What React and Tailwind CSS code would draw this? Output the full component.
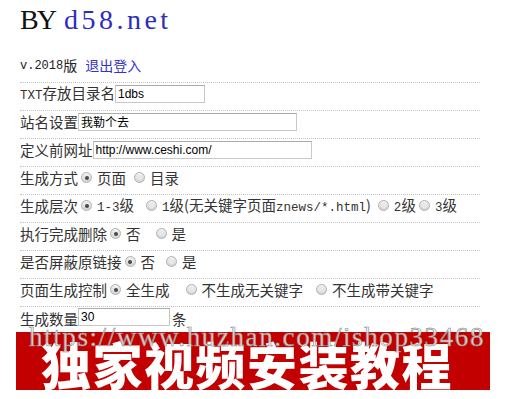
import React from 'react';

const cjk = { fontFamily: '"Noto Sans CJK SC", "Noto Sans", sans-serif' };
const mono = { fontFamily: '"Liberation Mono", "Noto Sans CJK SC", monospace' };

function Radio({ checked }) {
  return (
    <span className="relative inline-block w-[11px] h-[11px] rounded-full border border-[#b0b0b0] bg-linear-to-b from-[#f2f2f2] to-[#d4d4d4] ml-[3px] mr-[5px] shrink-0">
      {checked ? (
        <span className="absolute left-[2.5px] top-[2.5px] w-[4px] h-[4px] rounded-full bg-[#4a4a4a]" />
      ) : (
        <span className="absolute left-[2px] top-[2px] w-[5px] h-[5px] rounded-full bg-[#e8e8e8]" />
      )}
    </span>
  );
}

// gap = space before the radio, in px classes written out in full
function Option({ checked, gap = '', children }) {
  return (
    <label className={`flex items-center ${gap}`}>
      <Radio checked={checked} />
      <span>{children}</span>
    </label>
  );
}

function Row({ children }) {
  return (
    <div className="flex items-center h-[28px] pb-[6px] border-t border-dotted border-[#c4c4c4] text-[14.5px] text-[#333] whitespace-nowrap">
      {children}
    </div>
  );
}

function Field({ width, value, cn }) {
  return (
    <div
      className={`h-[18px] border border-[#c8c8c8] border-t-[#aaa] bg-white flex items-center pl-[2px] text-[12px] text-black ${width}`}
      style={cn ? cjk : { fontFamily: '"Liberation Sans", Arial, sans-serif' }}
    >
      {value}
    </div>
  );
}

const M = ({ children }) => <span style={mono} className="text-[12.5px]">{children}</span>;

export default function App() {
  return (
    <div className="w-[519px] h-[399px] bg-white overflow-hidden" style={cjk}>
      <div className="pl-[20px] pt-[2px]">
        <div className="h-[36px] flex items-center text-[28px] leading-none" style={{ fontFamily: '"Liberation Serif", serif' }}>
          <span className="text-[#111] tracking-[-2px]">BY</span>
          <span className="text-[#2c2cbe] tracking-[3.5px] ml-[9px]">d58.net</span>
        </div>
        <div className="h-[44px] flex items-center pt-[11px] text-[13px] text-[#222]">
          <span style={mono} className="text-[12px]">v.2018</span>
          <span className="text-[14px]">版</span>
          <a className="ml-[8px] text-[14px] text-[#3434c4]">退出登入</a>
        </div>

        <div className="w-[460px]">
          <Row>
            <span><M>TXT</M>存放目录名</span>
            <Field width="w-[90px]" value="1dbs" />
          </Row>
          <Row>
            <span>站名设置</span>
            <Field width="w-[219px]" value="我勒个去" cn />
          </Row>
          <Row>
            <span>定义前网址</span>
            <Field width="w-[219px]" value="http://www.ceshi.com/" />
          </Row>
          <Row>
            <span>生成方式</span>
            <Option checked>页面</Option>
            <Option gap="ml-[5px]">目录</Option>
          </Row>
          <Row>
            <span>生成层次</span>
            <Option checked><M>1-3</M>级</Option>
            <Option gap="ml-[9px]">
              <M>1</M>级(无关键字页面<M>znews/*.html</M>)
            </Option>
            <Option gap="ml-[4px]"><M>2</M>级</Option>
            <Option><M>3</M>级</Option>
          </Row>
          <Row>
            <span>执行完成删除</span>
            <Option checked>否</Option>
            <Option gap="ml-[12px]">是</Option>
          </Row>
          <Row>
            <span>是否屏蔽原链接</span>
            <Option checked>否</Option>
            <Option gap="ml-[8px]">是</Option>
          </Row>
          <Row>
            <span>页面生成控制</span>
            <Option checked>全生成</Option>
            <Option gap="ml-[13px]">不生成无关键字</Option>
            <Option gap="ml-[10px]">不生成带关键字</Option>
          </Row>
          <div className="flex items-start pt-[1px] h-[26px] border-t border-dotted border-[#c4c4c4] text-[14.5px] text-[#333]">
            <span>生成数量</span>
            <Field width="w-[92px]" value="30" />
            <span className="ml-[2px]">条</span>
          </div>
        </div>
      </div>

      <div className="relative ml-[16px] w-[474px] h-[58px] bg-[#c20000] flex items-end pb-[2px] pl-[25px]">
        <span className="text-white text-[50px] font-black leading-none tracking-[1.5px]" style={cjk}>
          独家视频安装教程
        </span>
        <span
          className="absolute left-[13px] top-[-8px] text-[27px] leading-none tracking-[1.6px] text-[#f0f0f0]/85 [-webkit-text-stroke:0.6px_#8a8a8a] whitespace-nowrap"
          style={{ fontFamily: '"Liberation Serif", serif' }}
        >
          https://www.huzhan.com/ishop33468
        </span>
      </div>
    </div>
  );
}
